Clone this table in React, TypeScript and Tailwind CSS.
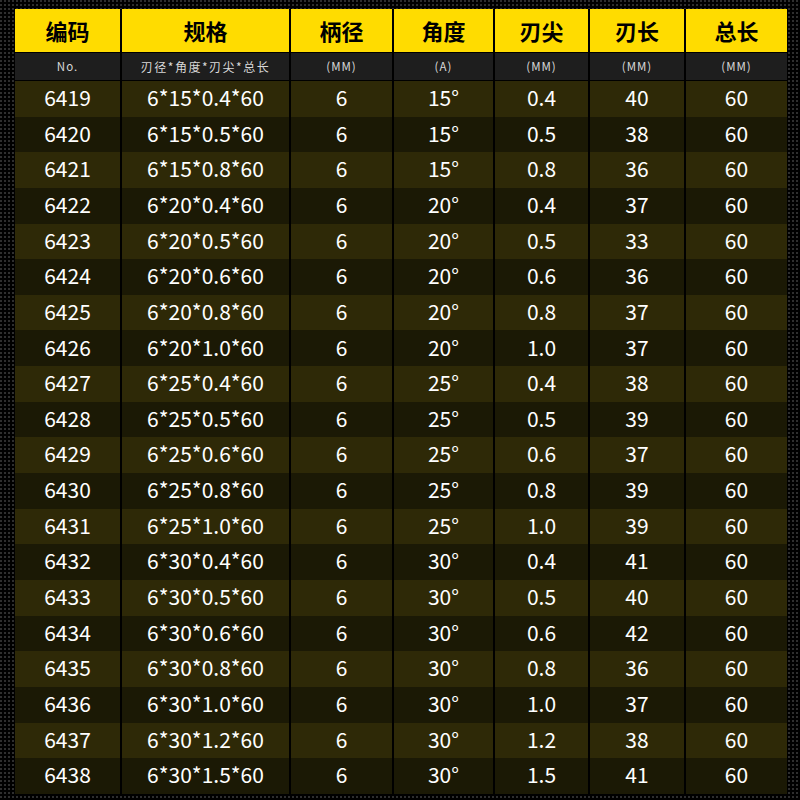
import React from "react";

const rows: string[][] = [
  ["6419", "6*15*0.4*60", "6", "15°", "0.4", "40", "60"],
  ["6420", "6*15*0.5*60", "6", "15°", "0.5", "38", "60"],
  ["6421", "6*15*0.8*60", "6", "15°", "0.8", "36", "60"],
  ["6422", "6*20*0.4*60", "6", "20°", "0.4", "37", "60"],
  ["6423", "6*20*0.5*60", "6", "20°", "0.5", "33", "60"],
  ["6424", "6*20*0.6*60", "6", "20°", "0.6", "36", "60"],
  ["6425", "6*20*0.8*60", "6", "20°", "0.8", "37", "60"],
  ["6426", "6*20*1.0*60", "6", "20°", "1.0", "37", "60"],
  ["6427", "6*25*0.4*60", "6", "25°", "0.4", "38", "60"],
  ["6428", "6*25*0.5*60", "6", "25°", "0.5", "39", "60"],
  ["6429", "6*25*0.6*60", "6", "25°", "0.6", "37", "60"],
  ["6430", "6*25*0.8*60", "6", "25°", "0.8", "39", "60"],
  ["6431", "6*25*1.0*60", "6", "25°", "1.0", "39", "60"],
  ["6432", "6*30*0.4*60", "6", "30°", "0.4", "41", "60"],
  ["6433", "6*30*0.5*60", "6", "30°", "0.5", "40", "60"],
  ["6434", "6*30*0.6*60", "6", "30°", "0.6", "42", "60"],
  ["6435", "6*30*0.8*60", "6", "30°", "0.8", "36", "60"],
  ["6436", "6*30*1.0*60", "6", "30°", "1.0", "37", "60"],
  ["6437", "6*30*1.2*60", "6", "30°", "1.2", "38", "60"],
  ["6438", "6*30*1.5*60", "6", "30°", "1.5", "41", "60"],
];

const heads = ["编码", "规格", "柄径", "角度", "刃尖", "刃长", "总长"];
const subs = ["No.", "刃径*角度*刃尖*总长", "(MM)", "(A)", "(MM)", "(MM)", "(MM)"];

const cols = "grid grid-cols-[107px_169px_103px_101px_95px_96px_101px]";
const font = { fontFamily: '"Noto Sans CJK SC", "Noto Sans", sans-serif' };

export default function App() {
  return (
    <div
      className="w-[800px] h-[800px] bg-black bg-[linear-gradient(to_right,transparent_2px,#000_2px),linear-gradient(to_bottom,#2e2e2e_2px,#000_2px)] bg-[length:4px_4px] pt-[9px] pl-[15px]"
      style={font}
    >
      <div className="w-[772px] bg-black flex flex-col">
        <div className={`${cols} h-[43px] bg-[#ffdc00]`}>
          {heads.map((h, i) => (
            <div
              key={i}
              className={`flex items-center justify-center text-[22px] font-bold text-black ${i < 6 ? "border-r-2 border-black" : ""}`}
            >
              {h}
            </div>
          ))}
        </div>
        <div className={`${cols} h-[27px] mt-[1px] bg-[#1e1e1e]`}>
          {subs.map((h, i) => (
            <div
              key={i}
              className={`flex items-center justify-center ${i === 1 ? "text-[12px] tracking-[1.5px]" : "text-[11.5px] tracking-[1px]"} text-[#d8d8d8] ${i < 6 ? "border-r-2 border-black" : ""}`}
            >
              {h}
            </div>
          ))}
        </div>
        <div className="mt-[1px] flex flex-col">
          {rows.map((r, ri) => (
            <div
              key={ri}
              className={`${cols} h-[35.65px] ${ri % 2 === 0 ? "bg-[#2e2907]" : "bg-[#1b1905]"}`}
            >
              {r.map((c, ci) => (
                <div
                  key={ci}
                  className={`flex items-center justify-center text-[21px] text-white ${ci < 6 ? "border-r-2 border-black" : ""}`}
                >
                  <span className="-mt-[2px]">{c}</span>
                </div>
              ))}
            </div>
          ))}
        </div>
      </div>
    </div>
  );
}
